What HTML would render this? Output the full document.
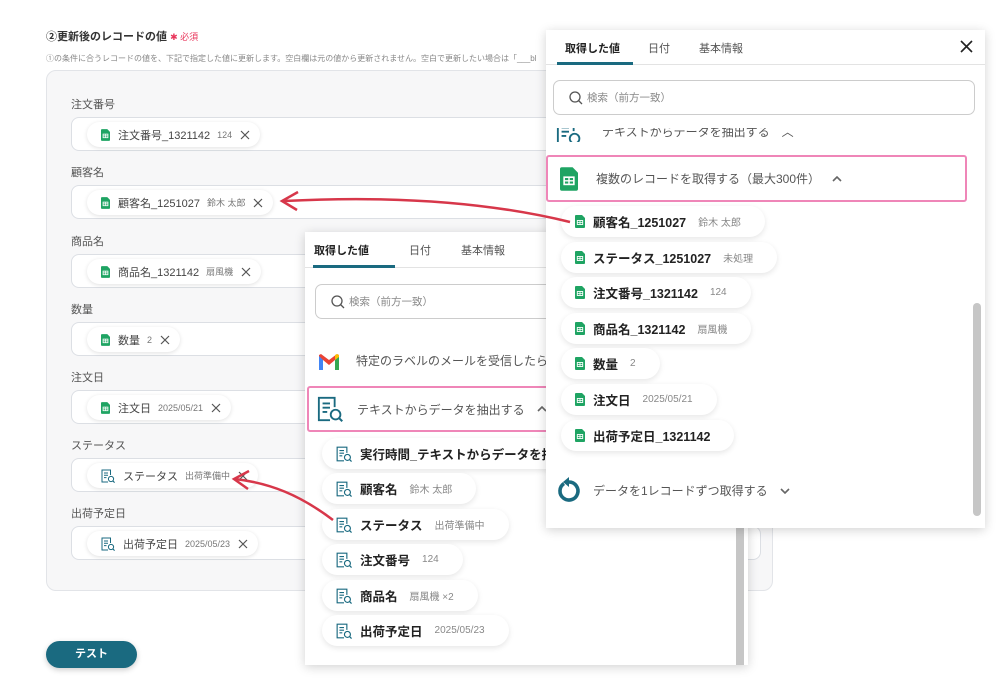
<!DOCTYPE html>
<html><head><meta charset="utf-8"><style>
*{box-sizing:border-box;margin:0;padding:0}
body{width:1000px;height:692px;background:#fff;position:relative;overflow:hidden;font-family:"Liberation Sans","Noto Sans CJK JP",sans-serif;color:#333}
.a{position:absolute}
.lbl{position:absolute;left:71px;font-size:11px;color:#555}
.inp{position:absolute;left:71px;width:690px;height:34px;background:#fff;border:1px solid #dcdfe4;border-radius:8px}
.chip{position:absolute;left:15px;top:4px;height:25px;background:#fff;border-radius:13px;box-shadow:0 1px 4px rgba(0,0,0,.12);display:flex;align-items:center;padding:0 10px 0 14px;font-size:11px;color:#444;white-space:nowrap}
.chip .v{font-size:9px;color:#777;margin-left:7px}
.chip .x{margin-left:8px;width:10px;height:10px}
.ic{margin-right:8px;flex:none}
.panel{position:absolute;background:#fff;box-shadow:0 2px 10px rgba(0,0,0,.18)}
.tabs{position:absolute;left:0;top:0;right:0;height:36px;border-bottom:1px solid #e3e3e3;font-size:11px;color:#555}
.tabs span{position:absolute;top:10px}
.tabs .ul{position:absolute;height:3px;background:#1a6a80;bottom:-1px}
.search{position:absolute;height:35px;border:1px solid #ccc;border-radius:7px;font-size:10.5px;color:#888;display:flex;align-items:center;padding-left:15px}
.it{position:absolute;height:31px;background:#fff;border-radius:16px;box-shadow:0 2px 6px rgba(0,0,0,.1);display:flex;align-items:center;padding:0 24px 0 14px;font-size:12.5px;color:#222;font-weight:bold;white-space:nowrap}
.it .v{font-weight:normal;font-size:10px;color:#888;margin-left:12px}
.pink{position:absolute;border:2px solid #ef86b8;border-radius:3px;background:#fff;display:flex;align-items:center;font-size:12px;color:#555}
.chev{margin-left:12px}
</style></head><body>
<svg width="0" height="0" style="position:absolute"><defs>
<symbol id="sh" viewBox="0 0 10 13"><path d="M0 1a1 1 0 0 1 1-1h6l3 3v9a1 1 0 0 1-1 1H1a1 1 0 0 1-1-1z" fill="#1fa463"/><rect x="2.3" y="5.5" width="5.4" height="4" fill="none" stroke="#fff" stroke-width=".9"/><path d="M2.3 7.5h5.4M5 5.5v4" stroke="#fff" stroke-width=".8"/></symbol>
<symbol id="tx" viewBox="0 0 14 14"><path d="M9.5 6V1H1v12h6" fill="none" stroke="#1a6a80" stroke-width="1"/><path d="M3 4h4M3 6.3h4M3 8.6h2.5" stroke="#1a6a80" stroke-width="1"/><circle cx="10" cy="10" r="2.6" fill="#fff" stroke="#1a6a80" stroke-width="1"/><path d="M11.8 11.8l1.8 1.8" stroke="#1a6a80" stroke-width="1.1"/></symbol>
<symbol id="xx" viewBox="0 0 10 10"><path d="M1 1l8 8M9 1l-8 8" stroke="#555" stroke-width="1.2"/></symbol>
<symbol id="up" viewBox="0 0 10 6"><path d="M1 5l4-4 4 4" fill="none" stroke="#666" stroke-width="1.6"/></symbol>
<symbol id="dn" viewBox="0 0 10 6"><path d="M1 1l4 4 4-4" fill="none" stroke="#666" stroke-width="1.6"/></symbol>
</defs></svg>

<div class="a" style="left:46px;top:28px;font-size:11px;font-weight:bold;color:#333">②更新後のレコードの値 <span style="color:#e8365b;font-weight:normal;font-size:9px">✱ 必須</span></div>
<div class="a" style="left:46px;top:53px;font-size:8px;color:#888;white-space:nowrap">①の条件に合うレコードの値を、下記で指定した値に更新します。空白欄は元の値から更新されません。空白で更新したい場合は「___bl</div>

<div class="a" style="left:46px;top:70px;width:727px;height:521px;background:#f7f7f8;border:1px solid #e2e4e8;border-radius:10px"></div>

<div class="lbl" style="top:96px">注文番号</div>
<div class="inp" style="top:117px"><div class="chip"><svg class="ic" width="9" height="12"><use href="#sh"/></svg>注文番号_1321142<span class="v">124</span><svg class="x"><use href="#xx"/></svg></div></div>
<div class="lbl" style="top:164px">顧客名</div>
<div class="inp" style="top:185px"><div class="chip"><svg class="ic" width="9" height="12"><use href="#sh"/></svg>顧客名_1251027<span class="v">鈴木 太郎</span><svg class="x"><use href="#xx"/></svg></div></div>
<div class="lbl" style="top:233px">商品名</div>
<div class="inp" style="top:254px"><div class="chip"><svg class="ic" width="9" height="12"><use href="#sh"/></svg>商品名_1321142<span class="v">扇風機</span><svg class="x"><use href="#xx"/></svg></div></div>
<div class="lbl" style="top:301px">数量</div>
<div class="inp" style="top:322px"><div class="chip"><svg class="ic" width="9" height="12"><use href="#sh"/></svg>数量<span class="v">2</span><svg class="x"><use href="#xx"/></svg></div></div>
<div class="lbl" style="top:369px">注文日</div>
<div class="inp" style="top:390px"><div class="chip"><svg class="ic" width="9" height="12"><use href="#sh"/></svg>注文日<span class="v">2025/05/21</span><svg class="x"><use href="#xx"/></svg></div></div>
<div class="lbl" style="top:437px">ステータス</div>
<div class="inp" style="top:458px"><div class="chip"><svg class="ic" width="14" height="14"><use href="#tx"/></svg>ステータス<span class="v">出荷準備中</span><svg class="x"><use href="#xx"/></svg></div></div>
<div class="lbl" style="top:505px">出荷予定日</div>
<div class="inp" style="top:526px"><div class="chip"><svg class="ic" width="14" height="14"><use href="#tx"/></svg>出荷予定日<span class="v">2025/05/23</span><svg class="x"><use href="#xx"/></svg></div></div>

<div class="a" style="left:46px;top:641px;width:91px;height:27px;background:#1a6a80;border-radius:14px;color:#fff;font-size:11px;font-weight:bold;text-align:center;line-height:27px;box-shadow:0 2px 6px rgba(0,0,0,.2)">テスト</div>

<!-- middle panel -->
<div class="panel" style="left:305px;top:232px;width:443px;height:433px;overflow:hidden">
 <div class="tabs"><span style="left:9px;color:#222;font-weight:bold">取得した値</span><span style="left:104px">日付</span><span style="left:156px">基本情報</span><div class="ul" style="left:8px;width:82px"></div></div>
 <div class="search" style="left:10px;top:52px;width:440px"><svg width="14" height="14" style="margin-right:4px"><circle cx="6" cy="6" r="5" fill="none" stroke="#555" stroke-width="1.3"/><path d="M9.5 9.5l3.5 3.5" stroke="#555" stroke-width="1.3"/></svg>検索（前方一致）</div>
 <svg class="a" style="left:12px;top:120px" width="24" height="18" viewBox="0 0 24 18"><path d="M2 3v15h4V8l6 5 6-5v10h4V3l-2-1-8 6-8-6z" fill="#ea4335"/><path d="M2 4v14h4V8z" fill="#4285f4"/><path d="M18 8v10h4V4z" fill="#34a853"/><path d="M22 3v2l-4 3V3l2-1z" fill="#fbbc04"/></svg>
 <div class="a" style="left:51px;top:120px;font-size:12px;color:#555;white-space:nowrap">特定のラベルのメールを受信したら</div>
 <div class="pink" style="left:2px;top:154px;width:460px;height:46px"><svg width="26" height="26" style="margin:0 14px 0 8px"><use href="#tx"/></svg>テキストからデータを抽出する <svg class="chev" width="10" height="6"><use href="#up"/></svg></div>
 <div class="it" style="left:17px;top:206px;width:460px"><svg class="ic" width="16" height="16"><use href="#tx"/></svg>実行時間_テキストからデータを抽出する</div>
 <div class="it" style="left:17px;top:241px"><svg class="ic" width="16" height="16"><use href="#tx"/></svg>顧客名<span class="v">鈴木 太郎</span></div>
 <div class="it" style="left:17px;top:277px"><svg class="ic" width="16" height="16"><use href="#tx"/></svg>ステータス<span class="v">出荷準備中</span></div>
 <div class="it" style="left:17px;top:312px"><svg class="ic" width="16" height="16"><use href="#tx"/></svg>注文番号<span class="v">124</span></div>
 <div class="it" style="left:17px;top:348px"><svg class="ic" width="16" height="16"><use href="#tx"/></svg>商品名<span class="v">扇風機 ×2</span></div>
 <div class="it" style="left:17px;top:383px"><svg class="ic" width="16" height="16"><use href="#tx"/></svg>出荷予定日<span class="v">2025/05/23</span></div>
 <div class="a" style="left:431px;top:296px;width:8px;height:137px;background:#c6c6c6"></div>
</div>

<!-- right panel -->
<div class="panel" style="left:546px;top:30px;width:439px;height:498px;overflow:hidden">
 <div class="tabs" style="height:35px"><span style="left:19px;color:#222;font-weight:bold">取得した値</span><span style="left:102px">日付</span><span style="left:153px">基本情報</span><div class="ul" style="left:11px;width:76px"></div></div>
 <svg class="a" style="left:414px;top:10px" width="13" height="13"><path d="M1 1l11 11M12 1L1 12" stroke="#222" stroke-width="1.6"/></svg>
 <div class="search" style="left:7px;top:50px;width:422px;height:35px"><svg width="14" height="14" style="margin-right:4px"><circle cx="6" cy="6" r="5" fill="none" stroke="#555" stroke-width="1.3"/><path d="M9.5 9.5l3.5 3.5" stroke="#555" stroke-width="1.3"/></svg>検索（前方一致）</div>
 <div class="a" style="left:0;top:98px;width:430px;height:14px;overflow:hidden"><div class="a" style="left:10px;top:-8px;display:flex;font-size:12px;color:#555;white-space:nowrap"><svg width="26" height="26" style="margin-right:20px"><use href="#tx"/></svg><span style="margin-top:3px">テキストからデータを抽出する　︿</span></div></div>
 <div class="pink" style="left:0;top:125px;width:421px;height:47px"><svg width="18" height="24" style="margin:0 18px 0 12px"><use href="#sh"/></svg>複数のレコードを取得する（最大300件） <svg class="chev" width="10" height="6"><use href="#up"/></svg></div>
 <div class="it" style="left:15px;top:176px"><svg class="ic" width="10" height="13"><use href="#sh"/></svg>顧客名_1251027<span class="v">鈴木 太郎</span></div>
 <div class="it" style="left:15px;top:212px"><svg class="ic" width="10" height="13"><use href="#sh"/></svg>ステータス_1251027<span class="v">未処理</span></div>
 <div class="it" style="left:15px;top:247px"><svg class="ic" width="10" height="13"><use href="#sh"/></svg>注文番号_1321142<span class="v">124</span></div>
 <div class="it" style="left:15px;top:283px"><svg class="ic" width="10" height="13"><use href="#sh"/></svg>商品名_1321142<span class="v">扇風機</span></div>
 <div class="it" style="left:15px;top:318px"><svg class="ic" width="10" height="13"><use href="#sh"/></svg>数量<span class="v">2</span></div>
 <div class="it" style="left:15px;top:354px"><svg class="ic" width="10" height="13"><use href="#sh"/></svg>注文日<span class="v">2025/05/21</span></div>
 <div class="it" style="left:15px;top:390px"><svg class="ic" width="10" height="13"><use href="#sh"/></svg>出荷予定日_1321142</div>
 <svg class="a" style="left:11px;top:447px" width="24" height="26" viewBox="0 0 24 26"><path d="M7 6.5A9 9 0 1 0 12 5" fill="none" stroke="#1a6a80" stroke-width="3.6"/><path d="M12 0v10l-6-5z" fill="#1a6a80"/></svg>
 <div class="a" style="left:47px;top:452px;font-size:12px;color:#555;white-space:nowrap;display:flex;align-items:center">データを1レコードずつ取得する <svg class="chev" width="10" height="6"><use href="#dn"/></svg></div>
 <div class="a" style="left:427px;top:273px;width:8px;height:213px;background:#c6c6c6;border-radius:4px"></div>
</div>

<!-- arrows -->
<svg class="a" style="left:0;top:0" width="1000" height="692">
<path d="M570 222 C480 200 380 196 284 201" fill="none" stroke="#d7374a" stroke-width="2.5"/>
<path d="M298 192 L282 201 L297 210" fill="none" stroke="#d7374a" stroke-width="2.5"/>
<path d="M333 520 C300 495 270 483 235 479" fill="none" stroke="#d7374a" stroke-width="2.5"/>
<path d="M249 471 L234 479 L248 489" fill="none" stroke="#d7374a" stroke-width="2.5"/>
</svg>
</body></html>
